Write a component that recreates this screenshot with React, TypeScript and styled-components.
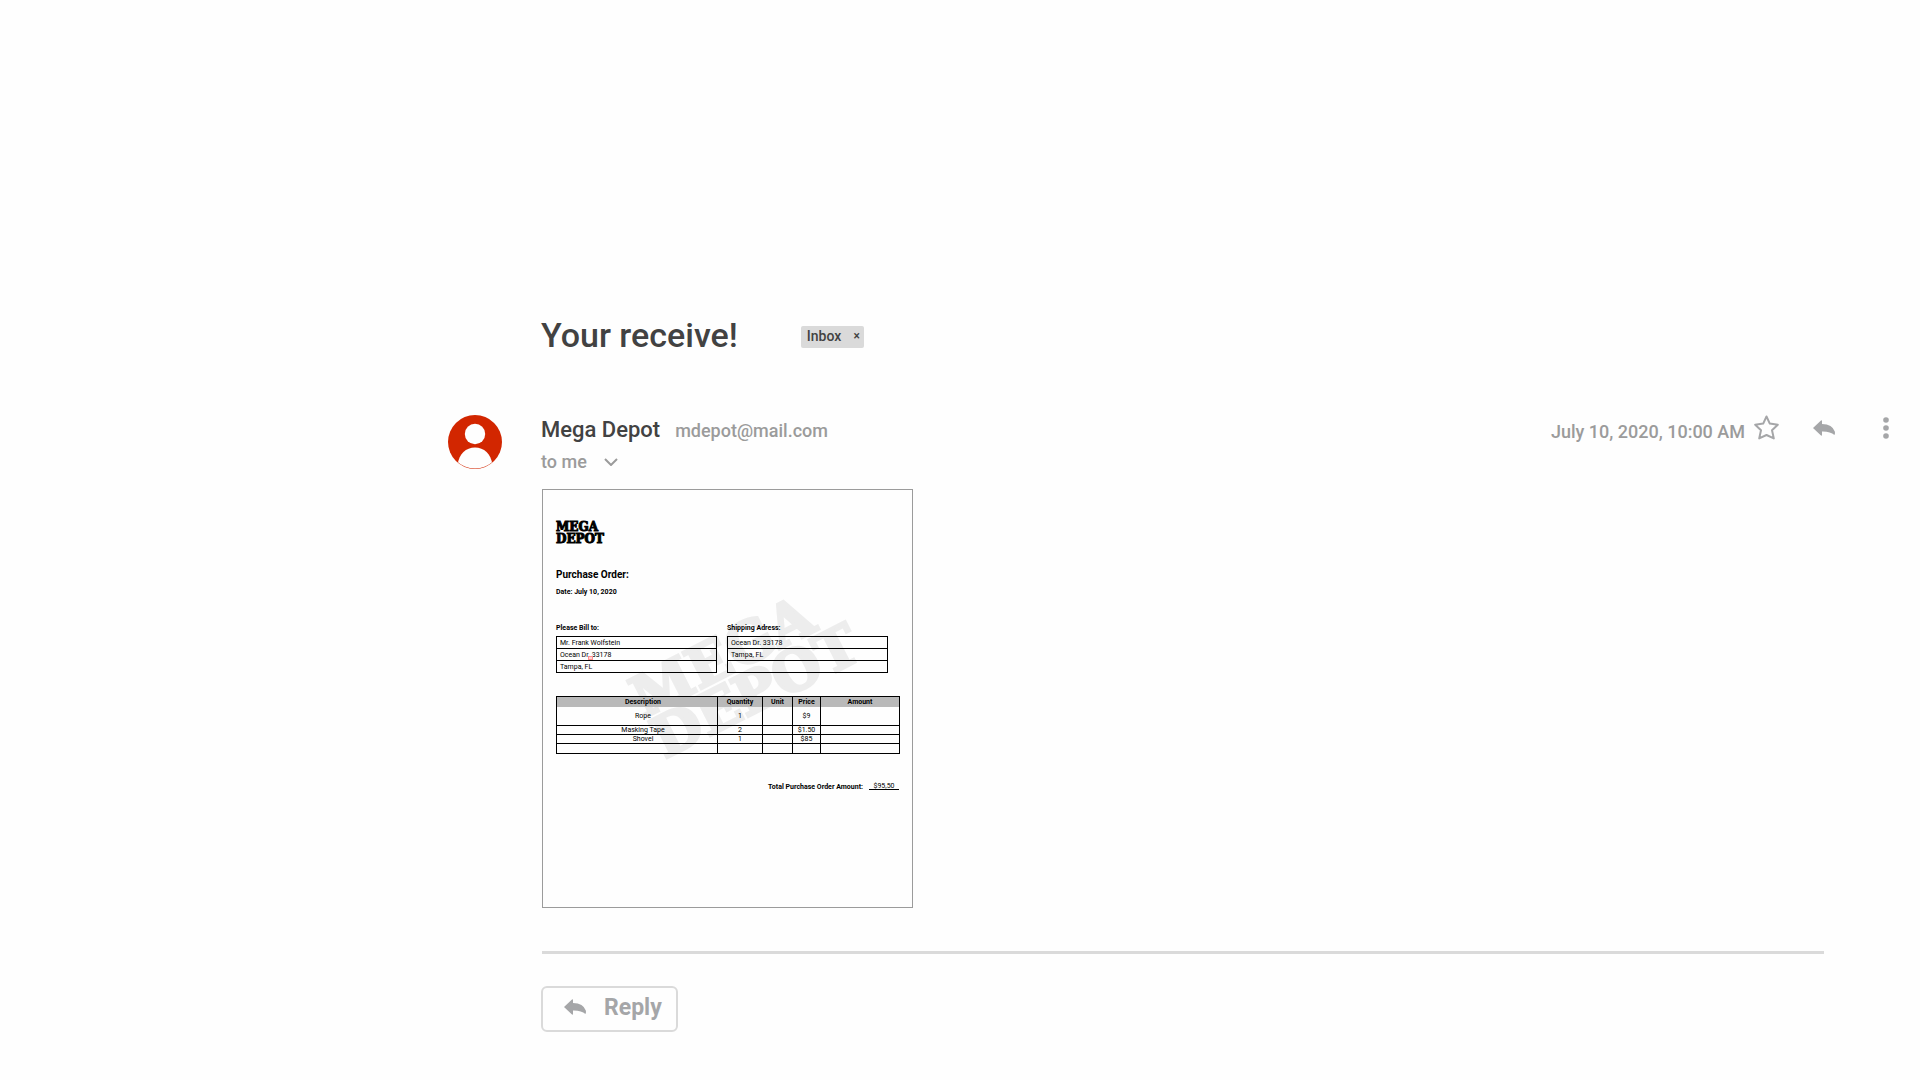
import React from "react";
import styled, { createGlobalStyle } from "styled-components";

const GlobalStyle = createGlobalStyle`
  *, *::before, *::after { box-sizing: border-box; }
  body { margin: 0; background: #fefefe; color: #424242; font-family: Roboto, "Liberation Sans", sans-serif; }
  h1, h2, h3, p { margin: 0; }
  button { font: inherit; color: inherit; background: none; border: 0; padding: 0; cursor: pointer; }
  svg { display: block; }
`;

const Page = styled.main`
  padding: 311px 31px 48px 448px;
`;

const SubjectRow = styled.header`
  display: flex;
  align-items: center;
  gap: 63px;
  padding-left: 93px;
  margin-bottom: 56px;
`;

const Subject = styled.h1`
  font-size: 34px;
  line-height: 48px;
  font-weight: 500;
`;

const Tag = styled.span`
  display: flex;
  align-items: center;
  justify-content: space-between;
  width: 63px;
  height: 22px;
  margin-top: 4px;
  padding: 0 4px 2px 6px;
  border-radius: 2px;
  background: #dadada;
  font-size: 14px;
  line-height: 20px;
  font-weight: 500;
`;

const TagClose = styled.button`
  font-size: 12px;
  line-height: 20px;
`;

const Message = styled.article`
  display: grid;
  grid-template-columns: 54px minmax(0, 1fr);
  column-gap: 39px;
`;

const Avatar = styled.svg`
  width: 54px;
  height: 54px;
`;

const MessageHead = styled.div`
  display: flex;
  align-items: flex-start;
  justify-content: space-between;
  height: 74px;
`;

const SenderLine = styled.div`
  display: flex;
  align-items: baseline;
  gap: 15px;
`;

const Sender = styled.h2`
  font-size: 22px;
  line-height: 30px;
  font-weight: 500;
`;

const Email = styled.a`
  color: #9b9b9b;
  font-size: 18px;
  line-height: 28px;
  font-weight: 500;
  text-decoration: none;
`;

const Recipient = styled.button`
  && {
    display: flex;
    align-items: center;
    gap: 17px;
    margin-top: 3px;
    color: #9b9b9b;
    font-size: 18px;
    line-height: 28px;
    font-weight: 500;
  }
`;

const Meta = styled.div`
  display: flex;
  align-items: center;
  color: #9b9b9b;
`;

const Sent = styled.time`
  font-size: 18px;
  line-height: 30px;
  font-weight: 500;
`;

const IconButton = styled.button<{ $gap: number }>`
  && { margin-left: ${(p) => p.$gap}px; padding-bottom: 8px; color: #a5a6a8; }
`;

const Attachment = styled.section`
  position: relative;
  isolation: isolate;
  width: 371px;
  min-height: 419px;
  margin-left: 1px;
  padding: 31px 13px 0;
  border: 1px solid #9b9b9b;
  color: #000;
  font-size: 7px;
  line-height: 10px;
`;

const Brand = styled.p`
  font-family: "DejaVu Serif", serif;
  font-weight: 700;
  font-size: 12px;
  line-height: 12px;
  -webkit-text-stroke: 1px currentColor;
`;

const BrandLine = styled.span`
  display: block;
`;

const Watermark = styled(Brand)`
  position: absolute;
  z-index: -1;
  left: 90px;
  top: 134px;
  color: #ededed;
  font-size: 56px;
  line-height: 46px;
  -webkit-text-stroke: 3px currentColor;
  transform: rotate(-27deg);
`;

const DocTitle = styled.h3`
  margin-top: 24px;
  font-size: 10px;
  line-height: 12px;
  font-weight: 700;
`;

const DocLabel = styled.p`
  font-weight: 700;
`;

const DocDate = styled(DocLabel)`
  margin-top: 6px;
`;

const Addresses = styled.div`
  display: flex;
  gap: 10px;
  margin-top: 26px;
`;

const AddressTable = styled.table`
  width: 161px;
  border-collapse: collapse;
  caption { text-align: left; font-weight: 700; padding-bottom: 3px; }
  td { height: 12px; padding: 0 3px; border: 1px solid #000; line-height: 10px; }
`;

const Marker = styled.span`
  position: absolute;
  left: 45px;
  top: 166px;
  width: 5px;
  height: 4px;
  border: 1px solid #ff8f8f;
  background: #ffd6d6;
`;

const Items = styled.table`
  width: 343px;
  margin-top: 23px;
  table-layout: fixed;
  border-collapse: collapse;
  border: 1px solid #000;
  text-align: center;
  thead { background: #b9b9b9; }
  th, td { padding: 0; border: solid #000; border-width: 0 1px; line-height: 8px; }
  td { border-bottom-width: 1px; }
  th:first-child, td:first-child { padding-left: 12px; }
`;

const ItemRow = styled.tr<{ $height: number }>`
  height: ${(p) => p.$height}px;
`;

const Total = styled.p`
  display: flex;
  justify-content: flex-end;
  gap: 6px;
  margin-top: 28px;
  font-weight: 700;
`;

const TotalValue = styled.span`
  width: 30px;
  height: 8px;
  border-bottom: 1px solid #000;
  text-align: center;
  font-weight: 400;
  line-height: 8px;
`;

const Divider = styled.hr`
  height: 3px;
  margin: 43px 65px 32px 1px;
  border: 0;
  background: #dadada;
`;

const ReplyButton = styled.button`
  && {
    display: flex;
    align-items: center;
    gap: 18px;
    height: 46px;
    padding: 0 14px 4px 21px;
    border: 2px solid #dadada;
    border-radius: 6px;
    color: #a5a6a8;
    font-size: 23px;
    font-weight: 700;
  }
`;

const ReplyIcon = () => (
  <svg width="22" height="16" viewBox="0 0 22 16" fill="currentColor" aria-hidden="true">
    <path d="M0 8 L8 0.4 Q9 0 9 1 V4 Q19.5 4.4 21.8 11.5 Q22.3 13.6 21.4 15 Q17.5 11.2 9 11.4 V15 Q9 16 8 15.6 Z" />
  </svg>
);

const ITEMS = [
  { name: "Rope", qty: "1", price: "$9", height: 19 },
  { name: "Masking Tape", qty: "2", price: "$1.50", height: 9 },
  { name: "Shovel", qty: "1", price: "$85", height: 9 },
  { name: "", qty: "", price: "", height: 10 },
];

const Address = ({ title, lines }: { title: string; lines: string[] }) => (
  <AddressTable>
    <caption>{title}</caption>
    <tbody>
      {lines.map((line, i) => (
        <tr key={i}><td>{line}</td></tr>
      ))}
    </tbody>
  </AddressTable>
);

export default function App() {
  return (
    <>
      <GlobalStyle />
      <Page>
        <SubjectRow>
          <Subject>Your receive!</Subject>
          <Tag>Inbox <TagClose aria-label="Remove Inbox label">×</TagClose></Tag>
        </SubjectRow>
        <Message>
          <Avatar viewBox="0 0 54 54" aria-hidden="true">
            <clipPath id="disc"><circle cx="27" cy="27" r="26.6" /></clipPath>
            <circle cx="27" cy="27" r="27" fill="#d22600" />
            <g fill="#fefefe" clipPath="url(#disc)">
              <circle cx="27" cy="19" r="10.2" />
              <path d="M9.5 50 C11 39 18 32.6 27 32.6 S43 39 44.5 50 V54 H9.5Z" />
            </g>
          </Avatar>
          <div>
            <MessageHead>
              <div>
                <SenderLine>
                  <Sender>Mega Depot</Sender>
                  <Email href="mailto:mdepot@mail.com">mdepot@mail.com</Email>
                </SenderLine>
                <Recipient>
                  to me
                  <svg width="14" height="8" viewBox="0 0 14 8" fill="none" stroke="currentColor" strokeWidth="2" aria-hidden="true">
                    <path d="M1 1 L7 7 L13 1" />
                  </svg>
                </Recipient>
              </div>
              <Meta>
                <Sent dateTime="2020-07-10T10:00">July 10, 2020, 10:00 AM</Sent>
                <IconButton $gap={9} aria-label="Star">
                  <svg width="25" height="25" viewBox="0 0 25 25" fill="none" stroke="currentColor" strokeWidth="2" strokeLinejoin="round">
                    <path d="M12.5 1.5 L15.8 8.6 L23.8 9.8 L18 15.2 L19.8 23.4 L12.5 20 L5.2 23.4 L7 15.2 L1.2 9.8 L9.2 8.6 Z" />
                  </svg>
                </IconButton>
                <IconButton $gap={34} aria-label="Reply"><ReplyIcon /></IconButton>
                <IconButton $gap={48} aria-label="More">
                  <svg width="6" height="22" viewBox="0 0 6 22" fill="currentColor">
                    <circle cx="3" cy="3" r="2.8" /><circle cx="3" cy="11" r="2.8" /><circle cx="3" cy="19" r="2.8" />
                  </svg>
                </IconButton>
              </Meta>
            </MessageHead>
            <Attachment>
              <Watermark aria-hidden="true">
                <BrandLine>MEGA</BrandLine>
                <BrandLine>DEPOT</BrandLine>
              </Watermark>
              <Brand>
                <BrandLine>MEGA</BrandLine>
                <BrandLine>DEPOT</BrandLine>
              </Brand>
              <DocTitle>Purchase Order:</DocTitle>
              <DocDate>Date: July 10, 2020</DocDate>
              <Addresses>
                <Address title="Please Bill to:" lines={["Mr. Frank Wolfstein", "Ocean Dr. 33178", "Tampa, FL"]} />
                <Address title="Shipping Adress:" lines={["Ocean Dr. 33178", "Tampa, FL", ""]} />
              </Addresses>
              <Marker />
              <Items>
                <colgroup>
                  <col width="161" /><col width="45" /><col width="30" /><col width="28" /><col width="79" />
                </colgroup>
                <thead>
                  <ItemRow $height={10}>
                    <th>Description</th><th>Quantity</th><th>Unit</th><th>Price</th><th>Amount</th>
                  </ItemRow>
                </thead>
                <tbody>
                  {ITEMS.map((item, i) => (
                    <ItemRow key={i} $height={item.height}>
                      <td>{item.name}</td><td>{item.qty}</td><td /><td>{item.price}</td><td />
                    </ItemRow>
                  ))}
                </tbody>
              </Items>
              <Total>Total Purchase Order Amount: <TotalValue>$95,50</TotalValue></Total>
            </Attachment>
            <Divider />
            <ReplyButton><ReplyIcon />Reply</ReplyButton>
          </div>
        </Message>
      </Page>
    </>
  );
}
